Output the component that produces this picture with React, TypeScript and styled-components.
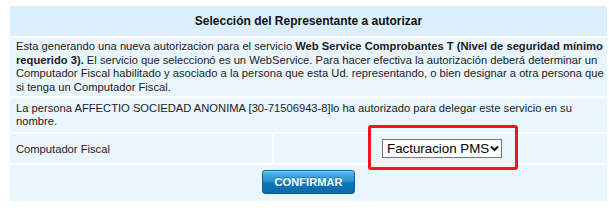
import styled, { createGlobalStyle } from 'styled-components';

const GlobalStyle = createGlobalStyle`
	body {
		margin: 4px 0 0 8px;
		background: #ffffff;
		font-family: 'Liberation Sans', Arial, sans-serif;
		color: #1b1b1b;
	}
`;

const Panel = styled.div`
	width: 597px;
	padding: 2px;
	display: flex;
	flex-direction: column;
	gap: 2px;
	background: #ffffff;
	font-size: 11.2px;
`;

const Header = styled.div`
	background: #dbf0fc;
	height: 30px;
	display: flex;
	align-items: center;
	justify-content: center;
	font-weight: bold;
	font-size: 12px;
	color: #111;
`;

const TextRow = styled.div<{ $pad?: string; $fixed?: boolean }>`
	background: #eaf6fe;
	padding: ${(p) => p.$pad || '2px 3px 2px 6px'};
	line-height: 13.5px;
	white-space: ${(p) => (p.$fixed ? 'nowrap' : 'normal')};
`;

const SplitRow = styled.div`
	display: grid;
	grid-template-columns: 262px 1fr;
	gap: 2px;
`;

const Cell = styled.div<{ $center?: boolean }>`
	background: #eaf6fe;
	height: 29px;
	display: flex;
	align-items: center;
	justify-content: ${(p) => (p.$center ? 'center' : 'flex-start')};
	padding: 0 5px 0 6px;
`;

const SelectWrap = styled.div`
	position: relative;
	margin-left: 2px;
`;

const Select = styled.select`
	appearance: none;
	-webkit-appearance: none;
	width: 120px;
	height: 19px;
	border: 1px solid #767676;
	border-radius: 0;
	background: #ffffff;
	color: #000;
	font-family: 'Liberation Sans', Arial, sans-serif;
	font-size: 13.33px;
	padding: 0 0 0 4px;
	margin: 0;
	outline: none;
`;

const Chevron = styled.svg`
	position: absolute;
	right: 3px;
	top: 6px;
	pointer-events: none;
`;

const Highlight = styled.div`
	position: absolute;
	left: -14px;
	right: -16px;
	top: -14px;
	bottom: -12px;
	border: 3px solid #f4131b;
	border-radius: 3px;
	pointer-events: none;
`;

const ButtonRow = styled.div`
	background: #eaf6fe;
	display: flex;
	justify-content: center;
	padding: 5px 0 7px;
`;

const ConfirmButton = styled.button`
	width: 93px;
	height: 24px;
	border: 1px solid #0b5f98;
	border-radius: 3px;
	background: linear-gradient(to bottom, #5db6e6 0%, #2a93d2 45%, #0c76bb 55%, #0a6aab 100%);
	box-shadow: inset 0 1px 0 rgba(255, 255, 255, 0.35);
	color: #ffffff;
	font-family: 'Liberation Sans', Arial, sans-serif;
	font-weight: bold;
	font-size: 11px;
	letter-spacing: 0.1px;
	text-shadow: 0 -1px 0 rgba(0, 40, 80, 0.4);
	padding: 0;
	cursor: pointer;
`;

export default function App() {
	return (
		<>
			<GlobalStyle />
			<Panel>
				<Header>Selección del Representante a autorizar</Header>
				<TextRow $fixed>
					Esta generando una nueva autorizacion para el servicio{' '}
					<b>Web Service Comprobantes T (Nivel de seguridad mínimo</b>
					<br />
					<b>requerido 3).</b> El servicio que seleccionó es un WebService. Para hacer efectiva la
					autorización deberá determinar un
					<br />
					Computador Fiscal habilitado y asociado a la persona que esta Ud. representando, o bien
					designar a otra persona que
					<br />
					si tenga un Computador Fiscal.
				</TextRow>
				<TextRow $pad="3.5px 5px 3.5px 6px">
					La persona AFFECTIO SOCIEDAD ANONIMA [30-71506943-8]lo ha autorizado para delegar este
					servicio en su nombre.
				</TextRow>
				<SplitRow>
					<Cell>Computador Fiscal</Cell>
					<Cell $center>
						<SelectWrap>
							<Select defaultValue="pms">
								<option value="pms">Facturacion PMS</option>
							</Select>
							<Chevron width="9" height="7" viewBox="0 0 9 7">
								<path d="M1 1.5 L4.5 5 L8 1.5" fill="none" stroke="#111" strokeWidth="2" />
							</Chevron>
							<Highlight />
						</SelectWrap>
					</Cell>
				</SplitRow>
				<ButtonRow>
					<ConfirmButton type="button">CONFIRMAR</ConfirmButton>
				</ButtonRow>
			</Panel>
		</>
	);
}
